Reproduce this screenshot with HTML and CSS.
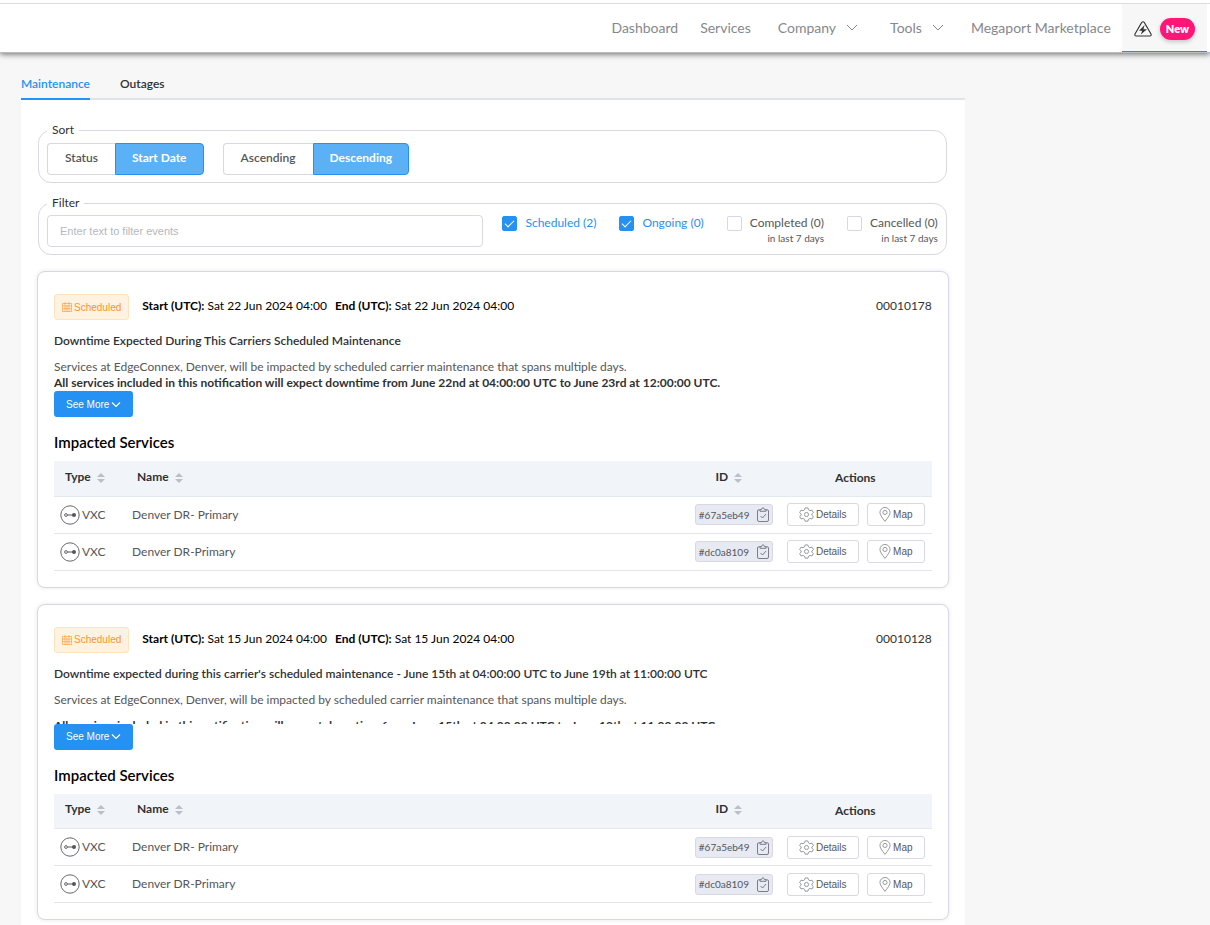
FILE: index.html
```html
<!DOCTYPE html>
<html lang="en">
<head>
<meta charset="utf-8">
<title>Maintenance and Outages</title>
<link rel="stylesheet" href="styles.css">
</head>
<body>
<svg class="sprite" aria-hidden="true">
  <symbol id="chevron" viewBox="0 0 12 8"><path d="M1 1l5 5 5-5" fill="none" stroke="currentColor"/></symbol>
  <symbol id="chevron-bold" viewBox="0 0 10 7"><path d="M1 1.500l4 4 4-4" fill="none" stroke="currentColor" stroke-width="1.200"/></symbol>
  <symbol id="hazard" viewBox="0 0 18 16"><path d="M7.6 1.6Q9 0 10.4 1.6L17 13q.7 2-1.2 2H2.2Q.3 15 1 13z" fill="none" stroke="currentColor" stroke-width="1.1"/><path d="M10.6 4L5 9.8h3.2L6.8 13.4 13 8.2H9.4z" fill="currentColor"/></symbol>
  <symbol id="calendar" viewBox="0 0 10 10"><path d="M.5 1.500h9v8h-9zM.5 4h9M.5 6.700h9M3 0v9.500M7 0v9.500M5 3v6.500" fill="none" stroke="currentColor" stroke-width=".6"/></symbol>
  <symbol id="sort" viewBox="0 0 8 10"><path d="M0 4l4-4 4 4zM0 6h8l-4 4z" fill="currentColor"/></symbol>
  <symbol id="vxc" viewBox="0 0 20 20"><circle cx="10" cy="10" r="9.2" fill="none" stroke="currentColor" stroke-width=".9"/><circle cx="6" cy="10" r="1.4" fill="none" stroke="currentColor" stroke-width=".9"/><path d="M7.4 10H13" stroke="currentColor"/><circle cx="14" cy="10" r="2" fill="currentColor"/></symbol>
  <symbol id="clipboard" viewBox="0 0 12 15"><path d="M3 2.8H1.8Q.5 2.8.5 4v9q0 1.5 1.5 1.5h8q1.500 0 1.500-1.500V4q0-1.200-1.300-1.200H9M3 4.300V2.600h1.500Q6-1.400 7.500 2.600H9v1.700zM3.500 9l2 2 3.500-4" fill="none" stroke="currentColor" stroke-width=".9"/></symbol>
  <symbol id="gear" viewBox="0 0 16 16"><path d="M6.500 1h3l.6 2 1.500.9 2.200-.6 1.500 2.600L13.700 7.500v1.200l1.600 1.500-1.500 2.600-2.200-.6-1.500.9-.6 2h-3l-.6-2-1.500-.9-2.200.6L.7 10.200l1.600-1.500V7.500L.7 5.900l1.500-2.600 2.200.6L5.900 3z" fill="none" stroke="currentColor" stroke-width=".8" stroke-linejoin="round"/><circle cx="8" cy="8" r="2.200" fill="none" stroke="currentColor" stroke-width=".8"/></symbol>
  <symbol id="pin" viewBox="0 0 12 16"><path d="M6 15.300Q.6 8.800.6 5.900a5.400 5.400 0 0 1 10.800 0Q11.400 8.800 6 15.300z" fill="none" stroke="currentColor" stroke-width=".8"/><circle cx="6" cy="5.800" r="2.200" fill="none" stroke="currentColor" stroke-width=".8"/></symbol>
</svg>

<header class="topbar">
  <nav class="nav">
    <a class="nav-link" href="#">Dashboard</a>
    <a class="nav-link" href="#">Services</a>
    <a class="nav-link nav-menu" href="#">Company <svg class="nav-chevron"><use href="#chevron"/></svg></a>
    <a class="nav-link nav-menu" href="#">Tools <svg class="nav-chevron"><use href="#chevron"/></svg></a>
    <a class="nav-link" href="#">Megaport Marketplace</a>
  </nav>
  <a class="alerts" href="#" aria-label="Maintenance and outages">
    <svg class="alerts-icon"><use href="#hazard"/></svg>
    <span class="new-pill">New</span>
  </a>
</header>

<main class="page">
  <nav class="tabs">
    <a class="tab tab-active" href="#">Maintenance</a>
    <a class="tab" href="#">Outages</a>
  </nav>

  <div class="panel">
    <fieldset class="group">
      <legend>Sort</legend>
      <div class="segments">
        <div class="segment">
          <button type="button" class="seg">Status</button>
          <button type="button" class="seg seg-on">Start Date</button>
        </div>
        <div class="segment">
          <button type="button" class="seg">Ascending</button>
          <button type="button" class="seg seg-on">Descending</button>
        </div>
      </div>
    </fieldset>

    <fieldset class="group group-filter">
      <legend>Filter</legend>
      <div class="filters">
        <input class="search" type="text" aria-label="Filter events" placeholder="Enter text to filter events">
        <label class="check"><input type="checkbox" checked><span>Scheduled (2)</span></label>
        <label class="check"><input type="checkbox" checked><span>Ongoing (0)</span></label>
        <label class="check"><input type="checkbox"><span>Completed (0)<small>in last 7 days</small></span></label>
        <label class="check"><input type="checkbox"><span>Cancelled (0)<small>in last 7 days</small></span></label>
      </div>
    </fieldset>

    <article class="card">
      <div class="card-head">
        <span class="badge"><svg><use href="#calendar"/></svg>Scheduled</span>
        <span class="when"><b>Start (UTC):</b> Sat 22 Jun 2024 04:00</span>
        <span class="when"><b>End (UTC):</b> Sat 22 Jun 2024 04:00</span>
        <span class="number">00010178</span>
      </div>
      <h2 class="title">Downtime Expected During This Carriers Scheduled Maintenance</h2>
      <div class="summary">
        <p>Services at EdgeConnex, Denver, will be impacted by scheduled carrier maintenance that spans multiple days.</p>
        <p><b>All services included in this notification will expect downtime from June 22nd at 04:00:00 UTC to June 23rd at 12:00:00 UTC.</b></p>
      </div>
      <button type="button" class="more">See More <svg><use href="#chevron-bold"/></svg></button>
      <h3 class="subtitle">Impacted Services</h3>
      <table class="services">
        <thead>
          <tr>
            <th class="col-type">Type <svg><use href="#sort"/></svg></th>
            <th class="col-name">Name <svg><use href="#sort"/></svg></th>
            <th class="col-id">ID <svg><use href="#sort"/></svg></th>
            <th class="col-actions">Actions</th>
          </tr>
        </thead>
        <tbody>
          <tr>
            <td><span class="type"><svg><use href="#vxc"/></svg>VXC</span></td>
            <td>Denver DR- Primary</td>
            <td><button type="button" class="id">#67a5eb49<svg><use href="#clipboard"/></svg></button></td>
            <td><div class="actions"><button type="button" class="action action-wide"><svg class="gear"><use href="#gear"/></svg>Details</button><button type="button" class="action"><svg class="pin"><use href="#pin"/></svg>Map</button></div></td>
          </tr>
          <tr>
            <td><span class="type"><svg><use href="#vxc"/></svg>VXC</span></td>
            <td>Denver DR-Primary</td>
            <td><button type="button" class="id">#dc0a8109<svg><use href="#clipboard"/></svg></button></td>
            <td><div class="actions"><button type="button" class="action action-wide"><svg class="gear"><use href="#gear"/></svg>Details</button><button type="button" class="action"><svg class="pin"><use href="#pin"/></svg>Map</button></div></td>
          </tr>
        </tbody>
      </table>
    </article>

    <article class="card">
      <div class="card-head">
        <span class="badge"><svg><use href="#calendar"/></svg>Scheduled</span>
        <span class="when"><b>Start (UTC):</b> Sat 15 Jun 2024 04:00</span>
        <span class="when"><b>End (UTC):</b> Sat 15 Jun 2024 04:00</span>
        <span class="number">00010128</span>
      </div>
      <h2 class="title">Downtime expected during this carrier's scheduled maintenance - June 15th at 04:00:00 UTC to June 19th at 11:00:00 UTC</h2>
      <div class="summary summary-spaced">
        <p>Services at EdgeConnex, Denver, will be impacted by scheduled carrier maintenance that spans multiple days.</p>
        <p><b>All services included in this notification will expect downtime from June 15th at 04:00:00 UTC to June 19th at 11:00:00 UTC</b></p>
      </div>
      <button type="button" class="more">See More <svg><use href="#chevron-bold"/></svg></button>
      <h3 class="subtitle">Impacted Services</h3>
      <table class="services">
        <thead>
          <tr>
            <th class="col-type">Type <svg><use href="#sort"/></svg></th>
            <th class="col-name">Name <svg><use href="#sort"/></svg></th>
            <th class="col-id">ID <svg><use href="#sort"/></svg></th>
            <th class="col-actions">Actions</th>
          </tr>
        </thead>
        <tbody>
          <tr>
            <td><span class="type"><svg><use href="#vxc"/></svg>VXC</span></td>
            <td>Denver DR- Primary</td>
            <td><button type="button" class="id">#67a5eb49<svg><use href="#clipboard"/></svg></button></td>
            <td><div class="actions"><button type="button" class="action action-wide"><svg class="gear"><use href="#gear"/></svg>Details</button><button type="button" class="action"><svg class="pin"><use href="#pin"/></svg>Map</button></div></td>
          </tr>
          <tr>
            <td><span class="type"><svg><use href="#vxc"/></svg>VXC</span></td>
            <td>Denver DR-Primary</td>
            <td><button type="button" class="id">#dc0a8109<svg><use href="#clipboard"/></svg></button></td>
            <td><div class="actions"><button type="button" class="action action-wide"><svg class="gear"><use href="#gear"/></svg>Details</button><button type="button" class="action"><svg class="pin"><use href="#pin"/></svg>Map</button></div></td>
          </tr>
        </tbody>
      </table>
    </article>
  </div>
</main>
</body>
</html>
```
FILE: styles.css
```css
* { box-sizing: border-box; }

body {
  margin: 0;
  min-height: 100vh;
  display: flex;
  flex-direction: column;
  background: #f7f7f7;
  color: #55565a;
  font: 12px/16px Lato, "Noto Sans", sans-serif;
}

button, input { font: inherit; color: inherit; margin: 0; }
a { color: inherit; text-decoration: none; }
.sprite { display: none; }

/* Top bar */
.topbar {
  display: flex;
  justify-content: flex-end;
  height: 52px;
  padding-right: 3px;
  border-top: 3px solid #fff;
  background: linear-gradient(#dcdcdc 1px, #fff 1px) padding-box;
  box-shadow: 0 0 0 1px #b8bcc0, 0 2px 6px rgba(0, 0, 0, .6);
}

.nav {
  display: flex;
  align-items: center;
  gap: 22px;
  padding-right: 11px;
  color: #86888d;
  font-size: 14px;
}
.nav-menu { display: flex; align-items: center; gap: 10px; padding: 0 5px; }
.nav-chevron { width: 12px; height: 8px; }

.alerts {
  display: flex;
  align-items: center;
  gap: 8px;
  margin-top: 1px;
  padding: 2px 12px 0;
  background: #f7f7f7;
  border-bottom: 1px solid #2b8ae0;
  color: #333;
}
.alerts-icon { width: 18px; height: 16px; }
.new-pill {
  padding: 3px 6px;
  border-radius: 11px;
  background: #ff1778;
  color: #fff;
  font-size: 11px;
  font-weight: 800;
  box-shadow: 0 2px 4px rgba(0, 0, 0, .2);
}

/* Page and tabs */
.page {
  flex: 1;
  display: flex;
  flex-direction: column;
  width: 78%;
  margin-left: 21px;
}
.tabs {
  display: flex;
  gap: 30px;
  height: 48px;
  border-bottom: 2px solid #dfe3ea;
  color: #303133;
  font-weight: 600;
}
.tab { margin-bottom: -2px; padding-top: 24px; }
.tab-active { color: #2591f3; border-bottom: 2px solid #2591f3; }

.panel {
  flex: 1;
  padding: 22px 16px 6px;
  background: #fff;
}

/* Sort and filter */
.group {
  min-width: 0;
  margin: 0 2px 12px 1px;
  padding: 5px 8px 7px;
  border: 1px solid #d8d8e5;
  border-radius: 13px;
}
.group-filter { padding-top: 4px; }
.group legend { padding: 0 5px; color: #303133; }
.segments { display: flex; gap: 19px; }
.segment { display: flex; }
.seg {
  height: 32px;
  padding: 0 17px 2px;
  border: 1px solid #d8d8e5;
  border-right: 0;
  border-radius: 4px 0 0 4px;
  background: #fff;
  font-weight: 600;
}
.seg-on {
  padding: 0 16px 2px;
  border: 1px solid #2591f3;
  border-radius: 0 4px 4px 0;
  background: #5cb0f6;
  color: #fff;
  font-weight: 700;
}

.filters { display: flex; gap: 23px; }
.search {
  flex: 1;
  min-width: 0;
  height: 32px;
  margin-right: -4px;
  padding: 0 12px;
  border: 1px solid #d8d8e5;
  border-radius: 4px;
  background: #fff;
  font: 11px "Liberation Sans", sans-serif;
}
.search::placeholder { color: #b4b8c0; }
.check { display: flex; gap: 8px; }
.check input {
  appearance: none;
  width: 15px;
  height: 15px;
  margin-top: 1px;
  border: 1px solid #d8d8e5;
  border-radius: 2px;
  background: #fff;
}
.check input:checked {
  border-color: #2591f3;
  background: #2591f3;
}
.check input:checked::before {
  content: "";
  display: block;
  width: 8px;
  height: 4px;
  margin: 3px 0 0 2px;
  border: solid #fff;
  border-width: 0 0 1px 1px;
  transform: rotate(-45deg);
}
.check input:checked + span { color: #2591f3; }
.check small { display: block; font-size: 10px; line-height: 14px; text-align: right; }

/* Event cards */
.card {
  margin-top: 16px;
  padding: 22px 16px 16px;
  border: 1px solid #d8d8e5;
  border-radius: 8px;
  background: #fff;
  box-shadow: 0 0 4px rgba(0, 0, 0, .1);
}
.card-head { display: flex; align-items: center; gap: 8px; color: #000; }
.badge {
  display: flex;
  align-items: center;
  gap: 2px;
  height: 26px;
  margin-right: 5px;
  padding: 0 7px;
  border: 1px solid #ffe3bd;
  border-radius: 3px;
  background: #fff2e0;
  color: #fe9526;
  font: 10px "Liberation Sans", sans-serif;
}
.badge svg { width: 10px; height: 10px; }
.when, .number { padding-bottom: 2px; }
.number { margin-left: auto; color: #303133; }
.title { margin: 13px 0 10px; color: #303133; font-size: 12px; font-weight: 600; line-height: 16px; }
.summary { height: 32px; overflow: hidden; }
.summary p { margin: 0; }
.summary b { color: #303133; }
.summary-spaced p + p { margin-top: 10px; }
.more {
  display: flex;
  align-items: center;
  gap: 2px;
  height: 26px;
  padding: 0 12px;
  border: 0;
  border-radius: 3px;
  background: #2591f3;
  color: #fff;
  font: 10px "Liberation Sans", sans-serif;
}
.more svg { width: 10px; height: 7px; }
.subtitle { margin: 15px 0 9px; color: #000; font-size: 15px; font-weight: 600; line-height: 20px; }

/* Impacted services */
.services { width: 100%; table-layout: fixed; border-collapse: collapse; }
.services th {
  height: 35px;
  padding: 0 11px 3px;
  border-bottom: 1px solid #e4e9f0;
  background: #f1f5f9;
  color: #303133;
  text-align: left;
}
.services th svg { width: 8px; height: 10px; margin-left: 3px; vertical-align: -2px; color: #bcbfc8; }
.services td { height: 37px; padding: 0 6px; border-bottom: 1px solid #e4e4ee; }
.services .col-type { width: 72px; white-space: nowrap; }
.services .col-id { width: 90px; padding: 0 10px 3px 0; text-align: center; }
.services .col-actions { width: 153px; padding: 0; text-align: center; }
.type { display: flex; align-items: center; gap: 2px; }
.type svg { width: 20px; height: 20px; }
.id {
  display: flex;
  align-items: center;
  justify-content: space-between;
  width: 78px;
  height: 21px;
  padding: 0 3px;
  border: 1px solid #d8d8e5;
  border-radius: 3px;
  background: #e7e9f3;
  font-size: 10px;
}
.id svg { width: 12px; height: 15px; color: #6f7178; }
.actions { display: flex; justify-content: flex-end; gap: 8px; padding-right: 1px; }
.action {
  display: flex;
  align-items: center;
  justify-content: center;
  gap: 2px;
  width: 58px;
  height: 23px;
  padding: 0;
  border: 1px solid #d8d8e5;
  border-radius: 3px;
  background: #fff;
  font: 10px "Liberation Sans", sans-serif;
}
.action svg { color: #77797f; }
.action-wide { width: 72px; }
.gear { width: 15px; height: 15px; }
.pin { width: 12px; height: 15px; }
```
